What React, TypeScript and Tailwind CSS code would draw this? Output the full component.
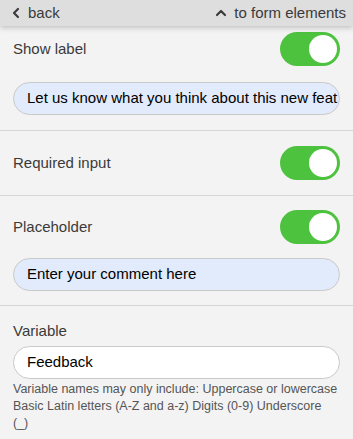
import { ChevronLeft, ChevronUp } from "lucide-react";

function Toggle() {
  return (
    <div className="flex h-[34px] w-[60px] shrink-0 items-center justify-end rounded-full bg-[#4dc23f] px-[3px]">
      <div className="size-[28px] rounded-full bg-white" />
    </div>
  );
}

function ToggleRow({ label }: { label: string }) {
  return (
    <div className="flex items-center justify-between">
      <span className="text-[15px] text-[#3a3a3a]">{label}</span>
      <Toggle />
    </div>
  );
}

function Field({ value, tinted = true }: { value: string; tinted?: boolean }) {
  return (
    <div
      className={
        tinted
          ? "flex h-[33px] items-center overflow-hidden whitespace-nowrap rounded-full border border-[#c9c9c9] bg-[#e2ebfb] px-[13px] text-[15px] text-black"
          : "flex h-[33px] items-center overflow-hidden whitespace-nowrap rounded-full border border-[#c9c9c9] bg-white px-[13px] text-[15px] text-black"
      }
    >
      {value}
    </div>
  );
}

export default function App() {
  return (
    <div
      className="h-[439px] w-[353px] overflow-hidden bg-[#f3f3f3]"
      style={{ fontFamily: "'Liberation Sans', Arial, sans-serif" }}
    >
      <div className="relative z-10 flex h-[26px] items-center justify-between bg-[#dedede] pl-[8px] pr-[7px] text-[15px] text-[#3a3a3a] shadow-[0_2px_5px_rgba(0,0,0,0.2)]">
        <div className="flex items-center gap-[4px]">
          <ChevronLeft className="size-[16px]" strokeWidth={3.2} />
          <span>back</span>
        </div>
        <div className="flex items-center gap-[5px]">
          <ChevronUp className="size-[16px]" strokeWidth={3.2} />
          <span>to form elements</span>
        </div>
      </div>

      <div className="px-[13px] pb-[15px] pt-[6px]">
        <ToggleRow label="Show label" />
        <div className="mt-[16px]">
          <Field value="Let us know what you think about this new feat" />
        </div>
      </div>

      <div className="border-t border-[#d6d6d6] px-[13px] py-[15px]">
        <ToggleRow label="Required input" />
      </div>

      <div className="border-t border-[#d6d6d6] px-[13px] pb-[14px] pt-[14px]">
        <ToggleRow label="Placeholder" />
        <div className="mt-[14px]">
          <Field value="Enter your comment here" />
        </div>
      </div>

      <div className="border-t border-[#d6d6d6] px-[13px] pt-[14px]">
        <div className="text-[15px] leading-[22px] text-[#3a3a3a]">Variable</div>
        <div className="mt-[4px]">
          <Field value="Feedback" tinted={false} />
        </div>
        <p className="mt-[2px] text-[12.5px] leading-[17px] text-[#555]">
          Variable names may only include: Uppercase or lowercase Basic Latin
          letters (A-Z and a-z) Digits (0-9) Underscore (_)
        </p>
      </div>
    </div>
  );
}
